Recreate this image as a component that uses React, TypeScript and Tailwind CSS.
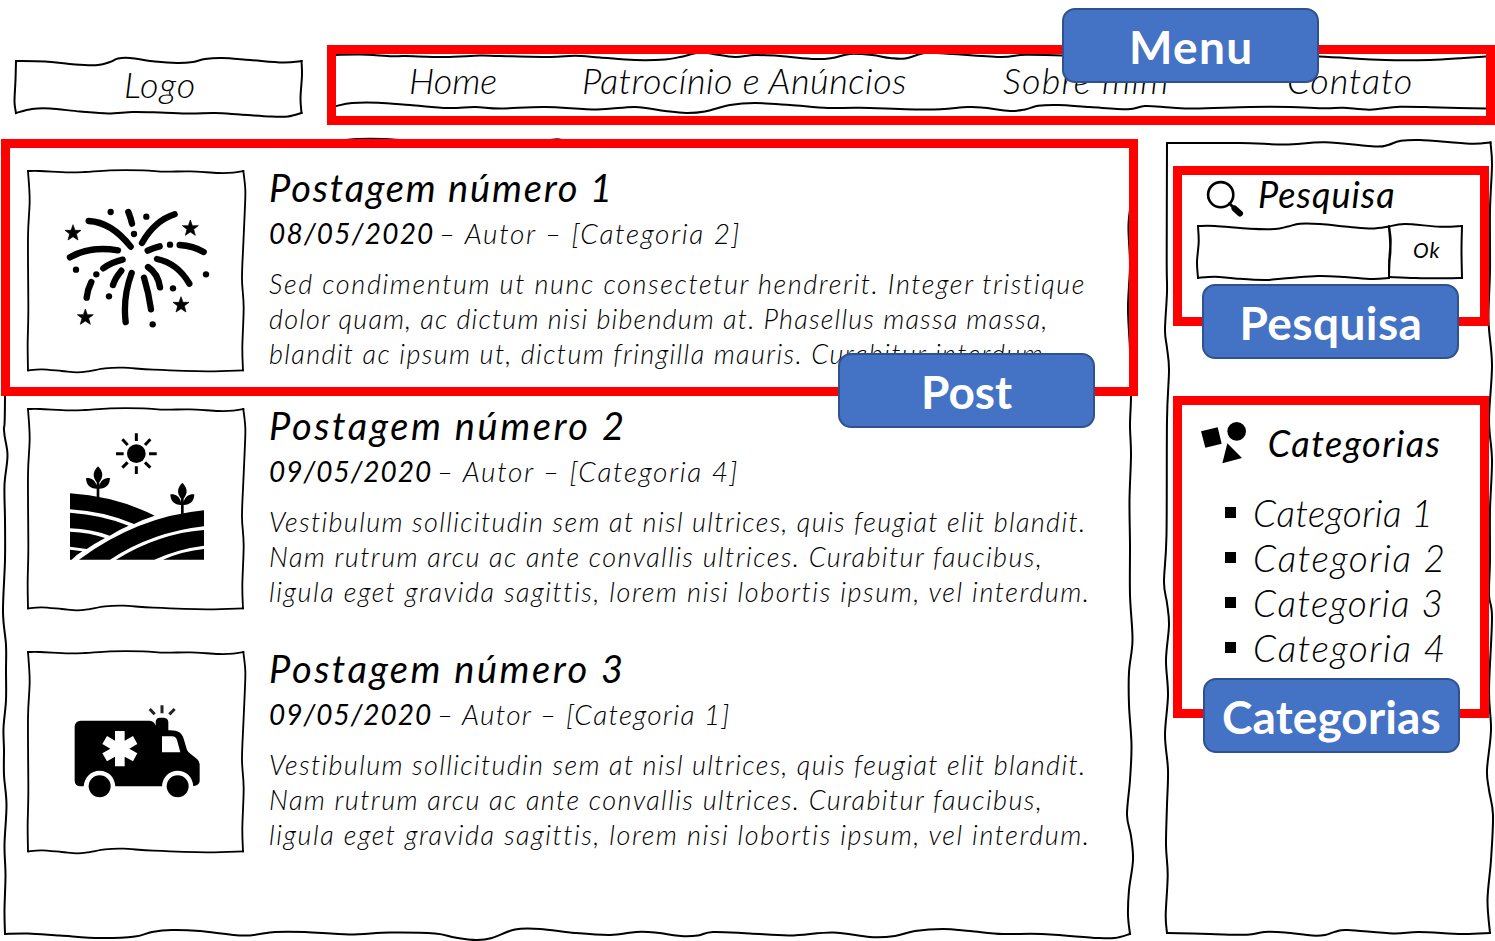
import { useLayoutEffect, useRef, useState } from "react";
import type { ReactNode } from "react";

type Edge = number[][];

/* Smooth hand-drawn line through a list of points. */
function curve(edge: Edge): string {
  let d = `M${edge[0][0]},${edge[0][1]}`;
  for (let i = 0; i < edge.length - 1; i++) {
    const p0 = edge[Math.max(i - 1, 0)];
    const p1 = edge[i];
    const p2 = edge[i + 1];
    const p3 = edge[Math.min(i + 2, edge.length - 1)];
    d += `C${p1[0] + (p2[0] - p0[0]) / 6},${p1[1] + (p2[1] - p0[1]) / 6} ${p2[0] - (p3[0] - p1[0]) / 6},${p2[1] - (p3[1] - p1[1]) / 6} ${p2[0]},${p2[1]}`;
  }
  return d;
}

function Sketch({ box, edges, width = 2 }: { box: string; edges: Edge[]; width?: number }) {
  return (
    <svg className="pointer-events-none absolute inset-0 h-full w-full overflow-visible" viewBox={box} preserveAspectRatio="none" fill="none" stroke="#000" strokeWidth={width} strokeLinecap="square">
      {edges.map((e, i) => (
        <path key={i} d={curve(e)} />
      ))}
    </svg>
  );
}

/* One line of text, tracked so that it spans the given width. */
function Fit({ w, children, className = "" }: { w: number; children: string; className?: string }) {
  const ref = useRef<HTMLSpanElement>(null);
  const [spacing, setSpacing] = useState(0);
  useLayoutEffect(() => {
    if (ref.current) setSpacing((w - ref.current.offsetWidth) / (children.length - 1));
  }, [w, children]);
  return (
    <span className={`block shrink-0 whitespace-nowrap ${className}`} style={{ width: w }}>
      <span ref={ref} style={{ letterSpacing: spacing }}>
        {children}
      </span>
    </span>
  );
}

const logoEdges: Edge[] = [
  [[16, 61], [45, 61.5], [75, 64.5], [98, 65], [110, 62], [118, 58.5], [130, 58], [155, 61.5], [177, 63], [193, 62], [205, 59], [222, 58], [250, 60], [283, 62.5], [301.5, 61]],
  [[301.5, 61], [302, 75], [300.5, 98], [301.5, 113]],
  [[301.5, 113], [288, 116.5], [270, 116.5], [240, 114.5], [215, 113], [190, 113.5], [160, 112.5], [133, 112], [108, 113.5], [80, 111.5], [50, 108.5], [32, 109], [16, 113]],
  [[16, 113], [14.5, 102], [15.5, 80], [16, 61]],
];

const navEdges: Edge[] = [
  [[336, 55], [360, 54.5], [392, 56.2], [405, 56], [445, 57], [480, 55.5], [500, 56], [550, 57], [575, 55.7], [600, 57.5], [635, 60], [665, 59.5], [680, 57], [700, 52.5], [713, 54], [735, 57], [755, 55], [780, 56], [815, 59], [832, 58], [850, 54], [872, 55], [890, 58], [905, 58.5], [925, 53], [945, 53.5], [1000, 57], [1025, 54.7], [1062, 55.5], [1150, 58], [1250, 54], [1319, 56.5], [1385, 60], [1430, 60], [1464, 58], [1486, 56.5]],
  [[336, 106], [352, 103], [378, 102.7], [410, 105], [448, 108], [475, 107], [500, 108.5], [545, 107], [597, 109.5], [635, 107], [665, 111], [686, 113], [705, 111.5], [730, 105], [755, 103], [790, 105], [828, 108], [860, 107.7], [928, 109.5], [968, 107], [985, 107.8], [1010, 111], [1025, 109.5], [1038, 105.8], [1058, 105], [1090, 107], [1128, 109.3], [1145, 106], [1170, 107.5], [1195, 108.5], [1250, 107], [1290, 107], [1325, 108.3], [1343, 107.7], [1370, 109.7], [1400, 106.7], [1440, 107.5], [1486, 108.5]],
];

const mainEdges: Edge[] = [
  [[5, 143], [120, 145], [300, 144], [340, 140.5], [358, 139], [384, 139], [402, 140.5], [430, 143], [530, 143], [548, 140.5], [557, 139.2], [568, 140.5], [620, 144], [900, 142], [1131, 143]],
  [[1131, 143], [1132, 190], [1128.5, 225], [1130, 265], [1128, 308], [1130, 350], [1131, 395], [1130, 425], [1131, 455], [1129.5, 500], [1130, 545], [1130, 595], [1132.5, 640], [1129, 672], [1129, 705], [1131.5, 745], [1130, 780], [1127, 815], [1131, 836], [1133, 860], [1129, 890], [1128, 915], [1130, 934]],
  [[1130, 934], [1115, 938], [1098, 938], [1041, 934], [1003, 934], [970, 931], [943, 929], [915, 931], [895, 936], [870, 937], [833, 932.5], [790, 935.5], [750, 933.5], [713, 932], [698, 935.5], [681, 936], [655, 932.5], [636, 932], [610, 935], [575, 933], [540, 929], [515, 929.5], [492, 938], [476, 940], [455, 937.5], [435, 933.5], [390, 932.5], [349, 934.5], [305, 932], [275, 932], [244, 935.5], [200, 931], [172, 930], [152, 932], [135, 936.5], [100, 938], [60, 935.5], [28, 933.5], [5, 934]],
  [[5, 934], [4.5, 910], [5.5, 875], [4.5, 845], [6.5, 805], [4, 775], [4, 750], [3.5, 728], [6, 700], [6, 670], [6, 645], [3, 612], [5, 560], [5, 520], [4.5, 485], [7.5, 455], [4, 430], [5, 395], [5, 143]],
];

const sideEdges: Edge[] = [
  [[1167, 143], [1240, 143], [1285, 144.5], [1325, 142.3], [1375, 146.5], [1388, 145], [1400, 141], [1420, 140], [1470, 143.7], [1490.5, 142.5]],
  [[1490.5, 142.5], [1492, 165], [1490, 210], [1490, 270], [1488.5, 320], [1492, 365], [1489, 420], [1492, 460], [1490, 510], [1490, 560], [1489, 595], [1492, 618], [1489, 690], [1491, 730], [1487, 770], [1489, 790], [1493, 815], [1491, 860], [1487.5, 900], [1490, 933]],
  [[1490, 933], [1462, 934], [1419, 932], [1393, 933.5], [1348, 930], [1336, 931.5], [1325, 935], [1312, 935.5], [1285, 932.5], [1264, 932], [1247, 934.8], [1210, 934], [1167, 933]],
  [[1167, 933], [1165.7, 915], [1167.7, 875], [1166, 845], [1167, 805], [1168, 770], [1165, 735], [1168, 695], [1166, 660], [1169, 625], [1167, 603], [1164, 582], [1166.5, 535], [1167, 420], [1169, 370], [1167, 348], [1165, 330], [1167, 292], [1166.7, 260], [1167, 143]],
];

const inputEdges: Edge[] = [
  [[1198, 226], [1215, 226], [1250, 228.7], [1275, 229], [1288, 226.5], [1300, 223.7], [1320, 224], [1350, 227], [1372, 228.5], [1389, 226.5]],
  [[1389, 226.5], [1390.7, 240], [1389.5, 256], [1389, 278]],
  [[1389, 278], [1372, 279], [1345, 277], [1318, 276], [1290, 278], [1265, 280], [1235, 278.5], [1215, 276.7], [1198, 277.7]],
  [[1198, 277.7], [1197, 262], [1198.7, 242], [1198, 226]],
];

const okEdges: Edge[] = [
  [[1389, 226.5], [1405, 224], [1440, 226.7], [1462, 226]],
  [[1462, 226], [1461.5, 250], [1462, 278]],
  [[1462, 278], [1445, 278.3], [1415, 278], [1389, 277]],
  [[1389, 278], [1389.3, 262], [1390.5, 250], [1389, 226.5]],
];

const thumbEdges: Edge[] = [
  [[54, 62], [90, 62], [175, 66], [225, 65], [300, 60], [400, 60], [465, 64], [540, 63], [625, 68], [670, 67], [700, 62]],
  [[700, 62], [706, 120], [704, 190], [700, 280], [696, 385], [701, 470], [697, 590], [699, 660]],
  [[699, 660], [590, 663], [430, 658], [340, 652], [285, 654], [235, 663], [200, 666], [155, 662], [95, 657], [54, 660]],
  [[54, 660], [53, 580], [55, 480], [54, 260], [59, 150], [54, 62]],
];

const star = "M0-24 6-7 24-7 10 4 15 22 0 12-15 22-10 4-24-7-6-7Z";

function Fireworks() {
  const dots = [[302, 185], [409, 199], [372, 251], [480, 283], [588, 372], [489, 414], [428, 522], [297, 438], [259, 372], [198, 358]];
  const stars = [[189, 247], [541, 233], [513, 463], [226, 500]];
  return (
    <g>
      <path
        fill="none"
        stroke="#000"
        strokeWidth="19"
        strokeLinecap="round"
        d="M236 212Q304 215 362 289M355 185Q362 202 366 220M396 278Q434 211 494 192M180 321Q239 286 324 300M413 301Q429 293 449 288M509 284Q549 286 581 305M441 326Q503 339 538 400M280 354Q304 336 338 328M334 361Q315 384 309 404M244 395Q232 419 230 442M365 368Q338 441 347 515M402 382Q416 427 423 477M414 350Q444 370 450 411"
      />
      {dots.map(([x, y]) => (
        <circle key={x} cx={x} cy={y} r="9.5" />
      ))}
      {stars.map(([x, y]) => (
        <path key={x} d={star} stroke="#000" strokeWidth="2" strokeLinejoin="round" transform={`translate(${x} ${y})`} />
      ))}
    </g>
  );
}

function Sprout({ x, y }: { x: number; y: number }) {
  return (
    <g transform={`translate(${x} ${y})`}>
      <path d="M0 0C18 18 15 34 4 48L4 57C10 40 20 34 36 35C35 57 24 66 4 67V98H-4V67C-24 66-35 57-36 35C-20 34-10 40-4 57V48C-15 34-18 18 0 0Z" />
    </g>
  );
}

function Farm() {
  return (
    <g transform="translate(0 21)">
      <circle cx="379" cy="175" r="28" />
      <path stroke="#000" strokeWidth="9" d="M379 114V137M379 213V236M318 175H341M417 175H440M337 132 353 149M421 132 405 149M337 217 353 201M421 217 405 201" />
      <Sprout x={264} y={213} />
      <Sprout x={517} y={262} />
      <path d="M180 294Q318 303 434 361Q402 371 372 386Q283 348 180 342ZM180 352Q278 359 356 391Q325 404 299 421Q245 402 180 399ZM180 409Q242 412 285 428Q253 445 230 461L180 454ZM180 463 217 468Q200 478 185 493H180ZM207 493Q382 364 582 345V393Q427 410 300 493ZM318 493Q447 414 582 404V451Q507 460 433 493ZM459 493Q520 467 582 461V493Z" />
    </g>
  );
}

function Ambulance() {
  return (
    <g transform="translate(0 12)">
      <path d="M212 256H419Q433 258 437 271V260Q438 247 450 247H462Q474 248 475 260V285C505 284 515 292 521 310L531 344Q535 352 543 357L561 371Q569 378 569 389V437Q568 450 550 453C548 425 529 406 503 406C477 406 457 426 456 453H316C314 425 295 406 269 406C243 406 223 426 221 453H212Q194 452 194 436V273Q195 258 212 256Z" />
      <path fill="#fff" d="M456 303H486Q498 304 501 314L511 351H456ZM315 287H344V316L369 302 382 326 358 340 382 354 369 378 344 364V393H315V364L291 378 277 354 301 340 277 326 291 302 315 316Z" />
      <circle cx="269" cy="453" r="33" />
      <circle cx="503" cy="453" r="33" />
      <path stroke="#222" strokeWidth="9" d="M456 210V234M419 221 434 237M494 221 478 237" />
    </g>
  );
}

function Post({ title, titleW, date, dateW, meta, metaW, lines, icon, className }: {
  title: string;
  titleW: number;
  date: string;
  dateW: number;
  meta: string;
  metaW: number;
  lines: [string, number][];
  icon: ReactNode;
  className: string;
}) {
  return (
    <article className={`flex ${className}`}>
      <div className="relative h-[200px] w-[216px] shrink-0">
        <Sketch box="54 62 648 600" edges={thumbEdges} width={5.5} />
        <svg className="relative h-[200px] w-[216px]" viewBox="54 62 648 600">
          {icon}
        </svg>
      </div>
      <div className="-mt-[6px] ml-[25px]">
        <h2 className="text-[38px] leading-[44px] font-normal">
          <Fit w={titleW}>{title}</Fit>
        </h2>
        <p className="mt-1.5 flex gap-[6px] text-[28px] leading-9 font-light">
          <Fit w={dateW} className="font-normal">{date}</Fit>
          <Fit w={metaW}>{meta}</Fit>
        </p>
        <div className="mt-[15px] text-[27px] leading-[35px] font-light">
          {lines.map(([text, w]) => (
            <Fit key={text} w={w}>{text}</Fit>
          ))}
        </div>
      </div>
    </article>
  );
}

function Tag({ children, w, className }: { children: string; w: number; className: string }) {
  return (
    <div className={`absolute flex h-[75px] w-[257px] items-center justify-center rounded-[13px] border-2 border-[#2f528f] bg-[#4472c4] pt-0.5 font-[Lato,sans-serif] text-[46px] leading-[69px] font-bold text-white not-italic ${className}`}>
      <Fit w={w}>{children}</Fit>
    </div>
  );
}

const vestibulum: [string, number][] = [
  ["Vestibulum sollicitudin sem at nisl ultrices, quis feugiat elit blandit.", 816],
  ["Nam rutrum arcu ac ante convallis ultrices. Curabitur faucibus,", 773],
  ["ligula eget gravida sagittis, lorem nisi lobortis ipsum, vel interdum.", 818],
];

export default function App() {
  return (
    <div className="relative flex h-[941px] w-[1495px] flex-col overflow-hidden bg-white font-['Ink_Free',Lato,sans-serif] text-black italic">
      <header className="flex h-[143px] shrink-0 items-start pt-[58px] pl-[15px] text-[36px] leading-[52px] font-light">
        <div className="relative h-[58px] w-[287px] pl-[109px]">
          <Sketch box="15 58 287 58" edges={logoEdges} />
          <Fit w={71}>Logo</Fit>
        </div>
        <nav className="relative ml-[34px] h-[58px] w-[1150px] -translate-y-[3px]">
          <Sketch box="336 55 1150 58" edges={navEdges} />
          <div className="-mt-px flex pl-[73px]">
            <Fit w={88}>Home</Fit>
            <Fit w={324} className="ml-[85px]">Patrocínio e Anúncios</Fit>
            <Fit w={165} className="ml-[97px]">Sobre mim</Fit>
            <Fit w={125} className="ml-[119px]">Contato</Fit>
          </div>
        </nav>
      </header>

      <div className="flex">
        <main className="relative ml-[5px] h-[791px] w-[1126px] shrink-0 pt-[27.7px] pl-[23px]">
          <Sketch box="5 143 1126 791" edges={mainEdges} />
          <Post
            className="h-[238px]"
            title="Postagem número 1"
            titleW={343}
            date="08/05/2020"
            dateW={164}
            meta="– Autor – [Categoria 2]"
            metaW={300}
            icon={<Fireworks />}
            lines={[
              ["Sed condimentum ut nunc consectetur hendrerit. Integer tristique", 815],
              ["dolor quam, ac dictum nisi bibendum at. Phasellus massa massa,", 778],
              ["blandit ac ipsum ut, dictum fringilla mauris. Curabitur interdum.", 781],
            ]}
          />
          <Post className="h-[243px]" title="Postagem número 2" titleW={355} date="09/05/2020" dateW={162} meta="– Autor – [Categoria 4]" metaW={300} icon={<Farm />} lines={vestibulum} />
          <Post className="h-[243px]" title="Postagem número 3" titleW={354} date="09/05/2020" dateW={162} meta="– Autor – [Categoria 1]" metaW={292} icon={<Ambulance />} lines={vestibulum} />
        </main>

        <aside className="relative ml-9 h-[790px] w-[323px] shrink-0 pt-[29px]">
          <Sketch box="1167 143 323 790" edges={sideEdges} />
          <div className="flex pl-[39px] text-[36px] leading-[44px] font-normal">
            <svg className="mt-[8px] h-[38px] w-[38px] shrink-0" viewBox="0 0 38 38" fill="none" stroke="#000" strokeLinecap="round">
              <circle cx="14.7" cy="14.7" r="12.6" strokeWidth="2.6" />
              <path d="M23.5 23.5 27 27" strokeWidth="3" />
              <path d="M28.5 28.5 34 33.5" strokeWidth="6" />
            </svg>
            <Fit w={137} className="ml-[14px]">Pesquisa</Fit>
          </div>
          <div className="mt-2 ml-[31px] flex h-[52px]">
            <div className="relative w-[191px]">
              <Sketch box="1198 226 191 52" edges={inputEdges} />
            </div>
            <div className="relative w-[73px] pl-[24px] text-[21px] leading-[48px]">
              <Sketch box="1389 226 73 52" edges={okEdges} />
              <Fit w={26}>Ok</Fit>
            </div>
          </div>
          <div className="mt-[143px] flex pl-[33px] text-[36px] leading-[44px] font-normal">
            <svg className="h-[43.3px] w-[46.7px] shrink-0" viewBox="150 125 140 130">
              <path d="M153 156 203 144 215 193 166 205ZM232 192 276 236 217 252Z" />
              <circle cx="260" cy="156" r="28" />
            </svg>
            <Fit w={172} className="ml-[21px]">Categorias</Fit>
          </div>
          <ul className="mt-[25px] pl-[58px] text-[37px] leading-[45px] font-light">
            {([["Categoria 1", 180], ["Categoria 2", 192], ["Categoria 3", 190], ["Categoria 4", 192]] as [string, number][]).map(([name, w]) => (
              <li key={name} className="flex gap-[17px]">
                <span className="mt-[17px] size-[11px] shrink-0 bg-black" />
                <Fit w={w}>{name}</Fit>
              </li>
            ))}
          </ul>
        </aside>
      </div>

      <div className="absolute top-[45px] left-[327px] h-[80px] w-[1168px] border-[9px] border-[#ff0000]" />
      <div className="absolute top-[139px] left-px h-[257px] w-[1137px] border-[9px] border-[#ff0000]" />
      <div className="absolute top-[166px] left-[1173px] h-[160px] w-[316px] border-[9px] border-[#ff0000]" />
      <div className="absolute top-[396px] left-[1173px] h-[322px] w-[316px] border-[9px] border-[#ff0000]" />
      <Tag w={123} className="top-[8px] left-[1062px]">Menu</Tag>
      <Tag w={182} className="top-[284px] left-[1202px]">Pesquisa</Tag>
      <Tag w={91} className="top-[353px] left-[838px]">Post</Tag>
      <Tag w={219} className="top-[678px] left-[1203px]">Categorias</Tag>
    </div>
  );
}
